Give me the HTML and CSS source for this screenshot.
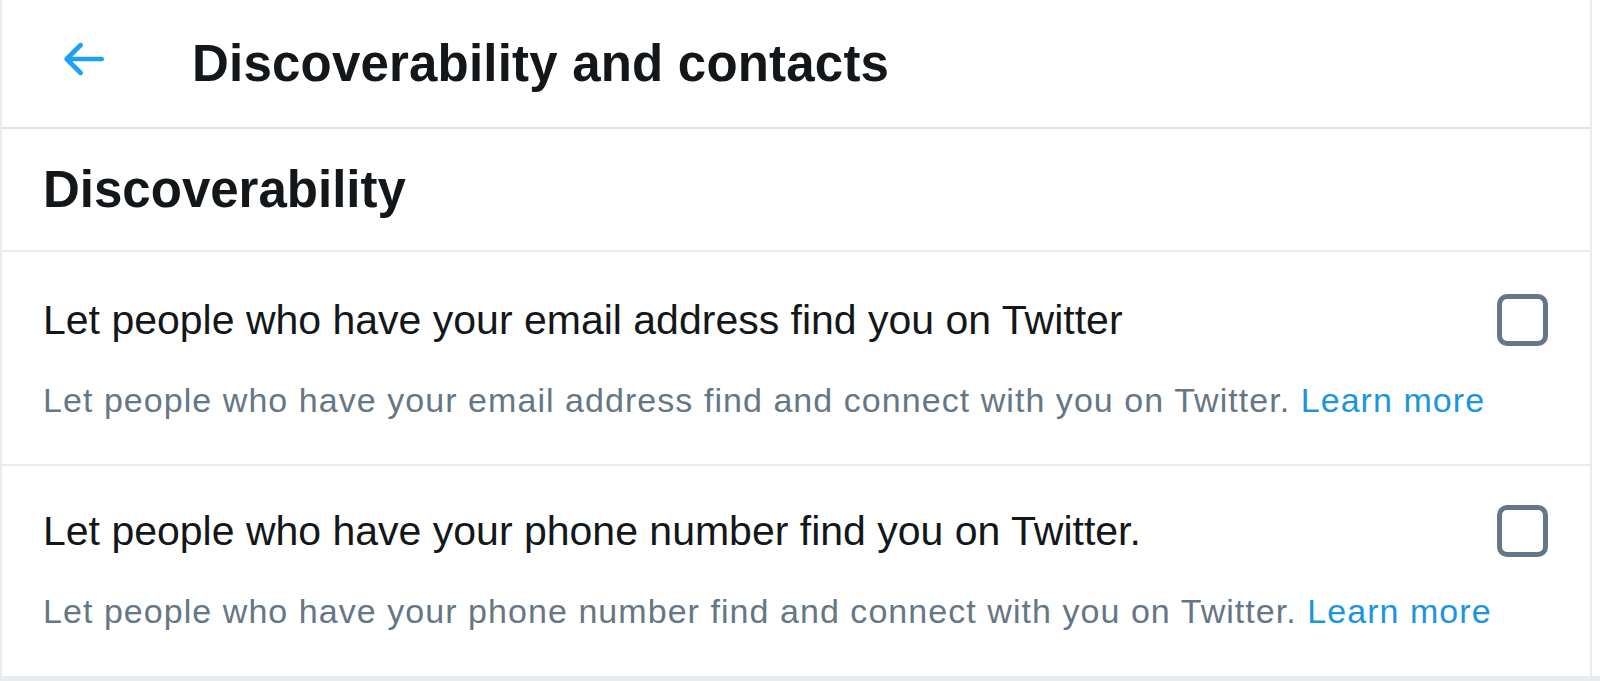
FILE: index.html
```html
<!DOCTYPE html>
<html lang="en">
<head>
<meta charset="utf-8">
<title>Discoverability and contacts</title>
<link rel="stylesheet" href="styles.css">
</head>
<body>
<div class="panel">
  <header class="topbar">
    <svg class="back" viewBox="0 0 24 24" aria-hidden="true"><path d="M20 11H7.414l4.293-4.293c.39-.39.39-1.023 0-1.414s-1.023-.39-1.414 0l-6 6c-.39.39-.39 1.023 0 1.414l6 6c.195.195.45.293.707.293s.512-.098.707-.293c.39-.39.39-1.023 0-1.414L7.414 13H20c.553 0 1-.447 1-1s-.447-1-1-1z"/></svg>
    <h1 class="title">Discoverability and contacts</h1>
  </header>
  <section class="section-head">
    <h2 class="heading">Discoverability</h2>
  </section>
  <div class="row">
    <div class="row-main">
      <span class="label">Let people who have your email address find you on Twitter</span>
      <span class="checkbox"></span>
    </div>
    <div class="sub">Let people who have your email address find and connect with you on Twitter. <a class="link" href="#">Learn more</a></div>
  </div>
  <div class="row last">
    <div class="row-main">
      <span class="label">Let people who have your phone number find you on Twitter.</span>
      <span class="checkbox"></span>
    </div>
    <div class="sub">Let people who have your phone number find and connect with you on Twitter. <a class="link" href="#">Learn more</a></div>
  </div>
</div>
<div class="footer"></div>
</body>
</html>
```

FILE: styles.css
```css
html, body {
  margin: 0;
  padding: 0;
  background: #ffffff;
}
body {
  font-family: "Liberation Sans", Arial, Helvetica, sans-serif;
  color: #14171a;
  width: 1600px;
  height: 681px;
  overflow: hidden;
}
.panel {
  width: 1588px;
  border-left: 2px solid #e6ecf0;
  border-right: 2px solid #e6ecf0;
  background: #ffffff;
}
.topbar {
  display: flex;
  align-items: center;
  height: 127px;
  padding-left: 53px;
  border-bottom: 2px solid #dde4ea;
}
.back {
  width: 56px;
  height: 56px;
  fill: #1da1f2;
  margin-right: 81px;
  margin-bottom: 9px;
  flex: none;
}
.title {
  margin: 0;
  font-size: 51px;
  font-weight: bold;
  line-height: 60px;
  letter-spacing: 0.2px;
  color: #14171a;
}
.section-head {
  display: flex;
  align-items: center;
  height: 121px;
  padding-left: 41px;
  border-bottom: 2px solid #e6ecf0;
}
.heading {
  margin: 0;
  font-size: 51px;
  font-weight: bold;
  line-height: 60px;
  color: #14171a;
}
.row {
  padding: 40px 42px 40px 41px;
  border-bottom: 2px solid #e6ecf0;
}
.row.last {
  border-bottom: none;
  padding-top: 37px;
  padding-bottom: 41px;
}
.row-main {
  display: flex;
  align-items: center;
  justify-content: space-between;
  height: 56px;
}
.label {
  font-size: 41px;
  line-height: 56px;
  color: #14171a;
}
.checkbox {
  box-sizing: border-box;
  width: 51px;
  height: 52px;
  border: 5px solid #657786;
  border-radius: 10px;
  flex: none;
}
.sub {
  margin-top: 28px;
  font-size: 34px;
  line-height: 48px;
  letter-spacing: 1.05px;
  color: #657786;
  white-space: nowrap;
}
.link {
  color: #1b95e0;
  text-decoration: none;
}
.footer {
  height: 20px;
  background: #e6ecf0;
}
```
